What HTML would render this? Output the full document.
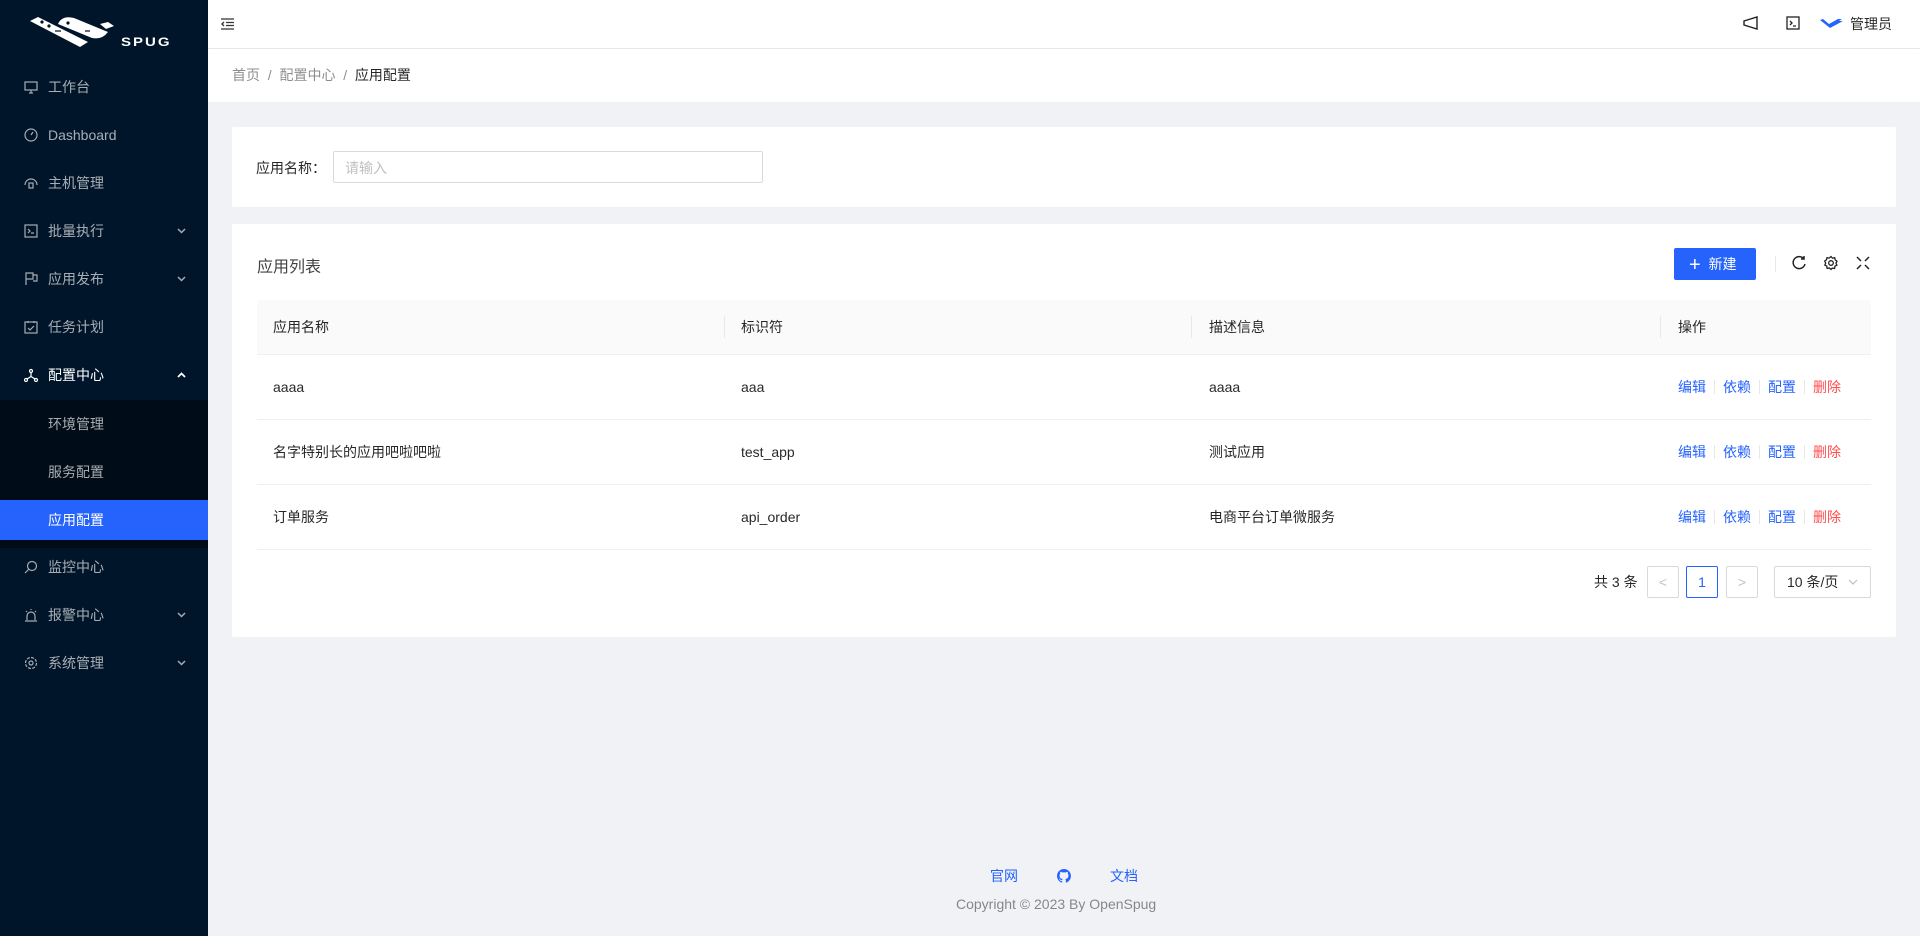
<!DOCTYPE html>
<html><head><meta charset="utf-8"><style>
*{box-sizing:border-box;margin:0;padding:0}
body{width:1920px;height:936px;overflow:hidden;background:#f0f2f5;font-family:"Liberation Sans","Noto Sans CJK SC",sans-serif;font-size:14px;color:rgba(0,0,0,.85);position:relative}
.side{position:absolute;left:0;top:0;width:208px;height:936px;background:#001529}
.mi{position:absolute;left:0;width:208px;height:40px;line-height:40px;color:rgba(255,255,255,.65);padding-left:48px}
.mi svg{position:absolute;left:24px;top:13px}
.mi svg.ar{left:auto;right:22px;top:17px}
.sub{position:absolute;left:0;top:400px;width:208px;height:148px;background:#000c17}
.hdr{position:absolute;left:208px;top:0;right:0;height:48px;background:#fff;box-shadow:0 1px 4px rgba(0,21,41,.08)}
.bc{position:absolute;left:208px;top:49px;right:0;height:53px;background:#fff;padding:16px 0 0 24px;color:rgba(0,0,0,.45)}
.card{position:absolute;left:232px;background:#fff;border-radius:2px}
.th,.tr{position:absolute;left:257px;width:1614px;height:65px;border-bottom:1px solid #f0f0f0}
.th{background:#fafafa;top:300px;height:55px}
.c{position:absolute;top:0;line-height:64px}
.th .c{line-height:54px}
.dv{position:absolute;top:16px;width:1px;height:22px;background:#e8e8e8}
a{color:#2563fc;text-decoration:none}
.act a{margin-right:8px}
.act i{display:inline-block;width:1px;height:14px;background:#e8e8e8;margin-right:8px;vertical-align:-2px}
.pg{position:absolute;top:566px;width:32px;height:32px;border:1px solid #d9d9d9;border-radius:2px;text-align:center;line-height:30px;color:rgba(0,0,0,.25);background:#fff}
</style></head><body>
<div class="side">
 <svg style="position:absolute;left:0;top:0" width="208" height="56" viewBox="0 0 208 56"><g fill="#fff"><path d="M30 21 L38 17 L88 42 L80 47 Z"/><path d="M58 24 Q62 15 74 18 L108 32 Q102 40 92 38 Z"/><path d="M100 24 L108 22 L114 26 L106 29 Z"/></g><circle cx="42" cy="22" r="1.6" fill="#001529"/><circle cx="49" cy="26" r="1.6" fill="#001529"/><circle cx="68" cy="23" r="1.6" fill="#001529"/><path d="M55 31h6M85 31h5" stroke="#001529" stroke-width="1.2"/><text x="121" y="46" fill="#fff" font-family="Liberation Sans" font-weight="bold" font-size="15" letter-spacing="2" transform="scale(1 0.8)" style="transform-origin:121px 46px">SPUG</text></svg>
 <div class="mi" style="top:67px"><svg width="14" height="14" viewBox="0 0 14 14" fill="none" stroke="#a6adb4" stroke-width="1.2"><rect x="1" y="2" width="12" height="8"/><path d="M5 13h4M7 10v3"/></svg>工作台</div>
 <div class="mi" style="top:115px"><svg width="14" height="14" viewBox="0 0 14 14" fill="none" stroke="#a6adb4" stroke-width="1.2"><circle cx="7" cy="7" r="6"/><path d="M7 7l2-3"/></svg>Dashboard</div>
 <div class="mi" style="top:163px"><svg width="14" height="14" viewBox="0 0 14 14" fill="none" stroke="#a6adb4" stroke-width="1.2"><path d="M1 9a6 6 0 0 1 12 0"/><rect x="5" y="7" width="4" height="5"/></svg>主机管理</div>
 <div class="mi" style="top:211px"><svg width="14" height="14" viewBox="0 0 14 14" fill="none" stroke="#a6adb4" stroke-width="1.2"><rect x="1" y="1" width="12" height="12"/><path d="M4 5l2 2-2 2M7 9h3"/></svg>批量执行<svg class="ar" width="9" height="6" viewBox="0 0 9 6" fill="none" stroke="#a6adb4" stroke-width="1.5"><path d="M1 1l3.5 3.5L8 1"/></svg></div>
 <div class="mi" style="top:259px"><svg width="14" height="14" viewBox="0 0 14 14" fill="none" stroke="#a6adb4" stroke-width="1.2"><path d="M2 13V1h7v6H2M9 3h4v6H9"/></svg>应用发布<svg class="ar" width="9" height="6" viewBox="0 0 9 6" fill="none" stroke="#a6adb4" stroke-width="1.5"><path d="M1 1l3.5 3.5L8 1"/></svg></div>
 <div class="mi" style="top:307px"><svg width="14" height="14" viewBox="0 0 14 14" fill="none" stroke="#a6adb4" stroke-width="1.2"><rect x="1" y="2" width="12" height="11"/><path d="M4 1v2M10 1v2M4 8l2 2 4-4"/></svg>任务计划</div>
 <div class="mi" style="top:355px;color:#fff"><svg width="14" height="14" viewBox="0 0 14 14" fill="none" stroke="#fff" stroke-width="1.2"><circle cx="7" cy="3" r="1.5"/><circle cx="2" cy="12" r="1.5"/><circle cx="12" cy="12" r="1.5"/><path d="M7 4.5v4L3 11M7 8.5l4 2.5"/></svg>配置中心<svg class="ar" width="9" height="6" viewBox="0 0 9 6" fill="none" stroke="#fff" stroke-width="1.8"><path d="M1 5l3.5-3.5L8 5"/></svg></div>
 <div class="sub"></div>
 <div class="mi" style="top:404px">环境管理</div>
 <div class="mi" style="top:452px">服务配置</div>
 <div class="mi" style="top:500px;background:#2563fc;color:#fff">应用配置</div>
 <div class="mi" style="top:547px"><svg width="14" height="14" viewBox="0 0 14 14" fill="none" stroke="#a6adb4" stroke-width="1.2"><circle cx="8" cy="6" r="4.5"/><path d="M5 9l-4 4"/></svg>监控中心</div>
 <div class="mi" style="top:595px"><svg width="14" height="14" viewBox="0 0 14 14" fill="none" stroke="#a6adb4" stroke-width="1.2"><path d="M3 12V8a4 4 0 0 1 8 0v4M1 13h12M7 1v1M2 3l1 1M12 3l-1 1"/></svg>报警中心<svg class="ar" width="9" height="6" viewBox="0 0 9 6" fill="none" stroke="#a6adb4" stroke-width="1.5"><path d="M1 1l3.5 3.5L8 1"/></svg></div>
 <div class="mi" style="top:643px"><svg width="14" height="14" viewBox="0 0 14 14" fill="none" stroke="#a6adb4" stroke-width="1.2"><circle cx="7" cy="7" r="2"/><circle cx="7" cy="7" r="5.5" stroke-dasharray="3 1.3"/></svg>系统管理<svg class="ar" width="9" height="6" viewBox="0 0 9 6" fill="none" stroke="#a6adb4" stroke-width="1.5"><path d="M1 1l3.5 3.5L8 1"/></svg></div>
</div>
<div class="hdr">
 <svg style="position:absolute;left:13px;top:18px" width="13" height="12" viewBox="0 0 13 12" fill="none" stroke="#333" stroke-width="1.3"><path d="M0 1h13M5 4.5h8M5 7.5h8M0 11h13M3 4l-2 2 2 2"/></svg>
 <svg style="position:absolute;left:1535px;top:16px" width="16" height="14" viewBox="0 0 16 14" fill="none" stroke="#222" stroke-width="1.4"><path d="M1 5v4l13 4V1z"/></svg>
 <svg style="position:absolute;left:1578px;top:16px" width="14" height="14" viewBox="0 0 14 14" fill="none" stroke="#222" stroke-width="1.3"><rect x="1" y="1" width="12" height="12"/><path d="M4 5l2 2-2 2M7 10h3"/></svg>
 <svg style="position:absolute;left:1612px;top:17px" width="26" height="12" viewBox="0 0 26 12"><path d="M0 3l3-1 6 5 9-5 4 0-3 2 4 0-13 7z" fill="#2563fc"/></svg>
 <span style="position:absolute;left:1642px;top:14px">管理员</span>
</div>
<div class="bc">首页 &nbsp;/&nbsp; 配置中心 &nbsp;/&nbsp; <span style="color:rgba(0,0,0,.85)">应用配置</span></div>
<div class="card" style="top:127px;height:80px;width:1664px">
 <span style="position:absolute;left:24px;top:31px">应用名称：</span>
 <div style="position:absolute;left:101px;top:24px;width:430px;height:32px;border:1px solid #d9d9d9;border-radius:2px;padding:6px 11px;color:#bfbfbf">请输入</div>
</div>
<div class="card" style="top:224px;height:413px;width:1664px">
 <span style="position:absolute;left:25px;top:29px;font-size:16px;color:rgba(0,0,0,.75)">应用列表</span>
 <div style="position:absolute;left:1442px;top:24px;width:82px;height:32px;background:#2563fc;border-radius:2px;color:#fff;line-height:32px;padding-left:15px"><span style="font-size:20px;vertical-align:-2px">+</span>&nbsp;&nbsp;新建</div>
 <div style="position:absolute;left:1543px;top:32px;width:1px;height:16px;background:#e8e8e8"></div>
 <svg style="position:absolute;left:1559px;top:31px" width="16" height="16" viewBox="0 0 16 16" fill="none" stroke="#222" stroke-width="1.5"><path d="M13 4A6 6 0 1 0 14 9M13 1v3h-3"/></svg>
 <svg style="position:absolute;left:1591px;top:31px" width="16" height="16" viewBox="0 0 16 16" fill="none" stroke="#222" stroke-width="1.3"><circle cx="8" cy="8" r="2.3"/><path d="M8 1.5l1.5 1.7 2.2-.5.5 2.2 1.8 1.3-1 2 .9 2-2 1-.3 2.3-2.3-.4L8 14.5l-1.6-1.5-2.3.4-.3-2.3-2-1 .9-2-1-2 1.8-1.3.5-2.2 2.2.5z"/></svg>
 <svg style="position:absolute;left:1624px;top:32px" width="14" height="14" viewBox="0 0 14 14" fill="none" stroke="#222" stroke-width="1.5"><path d="M1 1l4 4M13 1l-4 4M1 13l4-4M13 13l-4-4"/></svg>
</div>
<div class="th"><span class="c" style="left:16px">应用名称</span><div class="dv" style="left:467px"></div><span class="c" style="left:484px">标识符</span><div class="dv" style="left:934px"></div><span class="c" style="left:952px">描述信息</span><div class="dv" style="left:1403px"></div><span class="c" style="left:1421px">操作</span></div>
<div class="tr" style="top:355px"><span class="c" style="left:16px">aaaa</span><span class="c" style="left:484px">aaa</span><span class="c" style="left:952px">aaaa</span><span class="c act" style="left:1421px"><a>编辑</a><i></i><a>依赖</a><i></i><a>配置</a><i></i><a style="color:#ff4d4f">删除</a></span></div>
<div class="tr" style="top:420px"><span class="c" style="left:16px">名字特别长的应用吧啦吧啦</span><span class="c" style="left:484px">test_app</span><span class="c" style="left:952px">测试应用</span><span class="c act" style="left:1421px"><a>编辑</a><i></i><a>依赖</a><i></i><a>配置</a><i></i><a style="color:#ff4d4f">删除</a></span></div>
<div class="tr" style="top:485px"><span class="c" style="left:16px">订单服务</span><span class="c" style="left:484px">api_order</span><span class="c" style="left:952px">电商平台订单微服务</span><span class="c act" style="left:1421px"><a>编辑</a><i></i><a>依赖</a><i></i><a>配置</a><i></i><a style="color:#ff4d4f">删除</a></span></div>
<span style="position:absolute;left:1594px;top:572px">共 3 条</span>
<div class="pg" style="left:1647px">&lt;</div>
<div class="pg" style="left:1686px;border-color:#2563fc;color:#2563fc">1</div>
<div class="pg" style="left:1726px">&gt;</div>
<div class="pg" style="left:1774px;width:97px;color:rgba(0,0,0,.85);text-align:left;padding-left:12px">10 条/页 <svg width="10" height="6" viewBox="0 0 10 6" fill="none" stroke="#bfbfbf" stroke-width="1.2" style="margin-left:6px;vertical-align:2px"><path d="M1 1l4 4 4-4"/></svg></div>
<div style="position:absolute;left:990px;top:866px"><a>官网</a></div>
<svg style="position:absolute;left:1057px;top:869px" width="14" height="14" viewBox="0 0 16 16"><path fill="#2563fc" d="M8 0a8 8 0 0 0-2.5 15.6c.4 0 .5-.2.5-.4v-1.5c-2.2.5-2.7-1-2.7-1-.4-.9-.9-1.2-.9-1.2-.7-.5.1-.5.1-.5.8.1 1.2.8 1.2.8.7 1.3 1.9.9 2.3.7.1-.5.3-.9.5-1.1-1.8-.2-3.6-.9-3.6-4 0-.9.3-1.6.8-2.1-.1-.2-.4-1 .1-2.1 0 0 .7-.2 2.2.8a7.5 7.5 0 0 1 4 0c1.5-1 2.2-.8 2.2-.8.4 1.1.2 1.9.1 2.1.5.6.8 1.3.8 2.1 0 3.1-1.9 3.8-3.6 4 .3.3.6.8.6 1.5v2.2c0 .2.1.5.6.4A8 8 0 0 0 8 0z"/></svg>
<div style="position:absolute;left:1110px;top:866px"><a>文档</a></div>
<div style="position:absolute;left:956px;top:896px;color:rgba(0,0,0,.45)">Copyright © 2023 By OpenSpug</div>
</body></html>
